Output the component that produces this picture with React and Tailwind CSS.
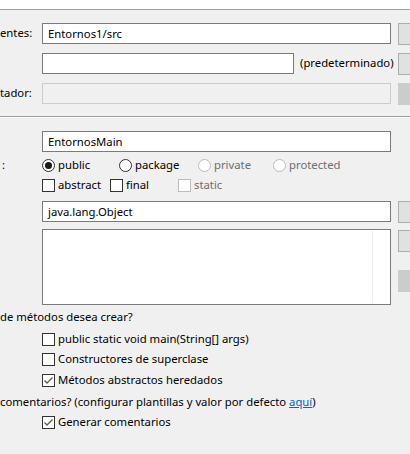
import React from "react"

const FONT = { fontFamily: '"Noto Sans", "Open Sans", sans-serif' }

function Input({ value, className = "", disabled }) {
  return (
    <div
      className={
        "h-[21px] shrink-0 flex items-center px-[5px] border " +
        (disabled ? "border-[#cccccc] bg-[#f0f0f0]" : "border-[#7a7a7a] bg-white") +
        " " + className
      }
    >
      <span className="leading-none">{value}</span>
    </div>
  )
}

function SideButton({ disabled, className = "" }) {
  return (
    <div
      className={
        "w-[20px] h-[22px] shrink-0 border " +
        (disabled ? "bg-[#cccccc] border-[#cccccc]" : "bg-[#e1e1e1] border-[#adadad]") +
        " " + className
      }
    />
  )
}

function Check({ checked, disabled, label }) {
  return (
    <div className="flex items-center h-[16px]">
      <div
        className={
          "w-[13px] h-[13px] shrink-0 border bg-white flex items-center justify-center " +
          (disabled ? "border-[#bcbcbc]" : "border-[#333333]")
        }
      >
        {checked && (
          <svg width="11" height="11" viewBox="0 0 11 11">
            <path d="M1.5 5.5 L4 8 L9.5 2.5" fill="none" stroke="#5a5a5a" strokeWidth="1.3" />
          </svg>
        )}
      </div>
      <span className={"ml-[3px] whitespace-nowrap " + (disabled ? "text-[#6d6d6d]" : "text-black")}>{label}</span>
    </div>
  )
}

function Radio({ checked, disabled, label }) {
  return (
    <div className="flex items-center h-[16px]">
      <div
        className={
          "w-[13px] h-[13px] shrink-0 rounded-full border bg-white flex items-center justify-center " +
          (disabled ? "border-[#bcbcbc]" : "border-[#333333]")
        }
      >
        {checked && <div className="w-[7px] h-[7px] rounded-full bg-[#1a1a1a]" />}
      </div>
      <span className={"ml-[3px] whitespace-nowrap " + (disabled ? "text-[#6d6d6d]" : "text-black")}>{label}</span>
    </div>
  )
}

export default function App() {
  return (
    <div className="w-[410px] h-[454px] overflow-hidden bg-[#f0f0f0] text-[11.3px] text-black" style={FONT}>
      <div className="h-[9px] bg-white" />
      <div className="h-px bg-[#a0a0a0]" />

      <div className="mt-[13px] flex items-center h-[21px]">
        <div className="w-[42px] shrink-0 whitespace-nowrap">entes:</div>
        <Input value="Entornos1/src" className="w-[349px]" />
        <SideButton className="ml-[7px]" />
      </div>

      <div className="mt-[9px] flex items-center h-[21px]">
        <div className="w-[42px] shrink-0" />
        <Input value="" className="w-[252px]" />
        <span className="ml-[6px] w-[91px] shrink-0 whitespace-nowrap">(predeterminado)</span>
        <SideButton className="ml-[7px]" />
      </div>

      <div className="mt-[9px] flex items-center h-[21px]">
        <div className="w-[42px] shrink-0 whitespace-nowrap">tador:</div>
        <Input value="" disabled className="w-[349px]" />
        <SideButton disabled className="ml-[7px]" />
      </div>

      <div className="mt-[12px] h-px bg-[#a0a0a0]" />
      <div className="h-px bg-white" />

      <div className="mt-[13px] flex items-center h-[21px]">
        <div className="w-[42px] shrink-0" />
        <Input value="EntornosMain" className="w-[349px]" />
      </div>

      <div className="mt-[5px] flex items-center h-[16px]">
        <div className="w-[42px] shrink-0 pl-[2px]">:</div>
        <div className="w-[77px] shrink-0"><Radio checked label="public" /></div>
        <div className="w-[79px] shrink-0"><Radio label="package" /></div>
        <div className="w-[75px] shrink-0"><Radio disabled label="private" /></div>
        <div className="shrink-0"><Radio disabled label="protected" /></div>
      </div>

      <div className="mt-[4px] flex items-center h-[16px]">
        <div className="w-[42px] shrink-0" />
        <div className="w-[68px] shrink-0"><Check label="abstract" /></div>
        <div className="w-[68px] shrink-0"><Check label="final" /></div>
        <div className="shrink-0"><Check disabled label="static" /></div>
      </div>

      <div className="mt-[8px] flex items-center h-[21px]">
        <div className="w-[42px] shrink-0" />
        <Input value="java.lang.Object" className="w-[349px]" />
        <SideButton className="ml-[7px]" />
      </div>

      <div className="mt-[7px] flex h-[76px]">
        <div className="w-[42px] shrink-0" />
        <div className="w-[349px] shrink-0 border border-[#7a7a7a] bg-white flex justify-end pr-[17px] py-[1px]">
          <div className="w-px bg-[#e8ecf0]" />
        </div>
        <div className="ml-[7px] flex flex-col">
          <SideButton className="mt-[1px]" />
          <SideButton disabled className="mt-[18px]" />
        </div>
      </div>

      <div className="mt-[4px] h-[16px] flex items-center whitespace-nowrap">de métodos desea crear?</div>

      <div className="mt-[6px] pl-[42px]"><Check label="public static void main(String[] args)" /></div>
      <div className="mt-[4px] pl-[42px]"><Check label="Constructores de superclase" /></div>
      <div className="mt-[5px] pl-[42px]"><Check checked label="Métodos abstractos heredados" /></div>

      <div className="mt-[6px] h-[16px] flex items-center whitespace-nowrap">
        comentarios? (configurar plantillas y valor por defecto&nbsp;
        <span className="text-[#0066cc] underline">aquí</span>)
      </div>
      <div className="mt-[4px] pl-[42px]"><Check checked label="Generar comentarios" /></div>
    </div>
  )
}
